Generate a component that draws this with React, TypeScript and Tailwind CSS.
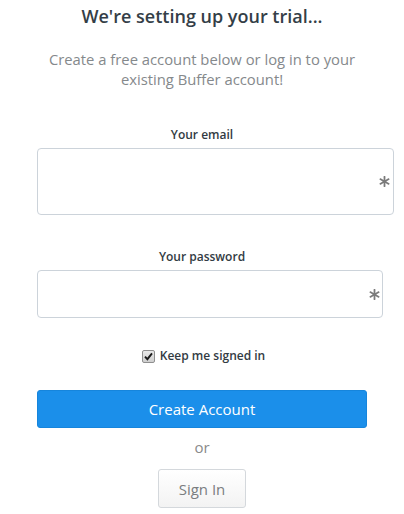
import React from "react";
import { FaAsterisk } from "react-icons/fa";

export default function App() {
  return (
    <div
      className="w-[404px] h-[514px] bg-white flex flex-col overflow-hidden"
      style={{ fontFamily: '"Open Sans", "Liberation Sans", sans-serif' }}
    >
      <h1 className="pt-[4px] text-center text-[18px] leading-[24px] font-semibold text-[#343e47]">
        We're setting up your trial...
      </h1>
      <p className="mt-[21px] text-center text-[14.8px] leading-[20px] text-[#85898c] px-[40px]">
        Create a free account below or log in to your existing Buffer account!
      </p>

      <label className="mt-[37px] text-center text-[12px] leading-[18px] font-semibold text-[#323b43]">
        Your email
      </label>
      <div className="mt-[4px] ml-[37px] w-[357px] h-[67px] border border-[#ccd3da] rounded-[4px] flex items-center justify-end pr-[3px]">
        <FaAsterisk className="text-[#7a7a7a]" size={11} />
      </div>

      <label className="mt-[33px] text-center text-[12px] leading-[18px] font-semibold text-[#323b43]">
        Your password
      </label>
      <div className="mt-[4px] ml-[37px] w-[346px] h-[48px] border border-[#ccd3da] rounded-[4px] flex items-center justify-end pr-[2px]">
        <FaAsterisk className="text-[#7a7a7a]" size={11} />
      </div>

      <div className="mt-[29px] flex items-center justify-center gap-[5px] pl-[3px]">
        <span className="w-[13px] h-[13px] border border-[#8f8f8f] rounded-[2px] bg-gradient-to-b from-[#e8e8e8] to-[#cfcfcf] flex items-center justify-center">
          <svg width="9" height="9" viewBox="0 0 9 9">
            <path d="M1 4.6 L3.4 7.2 L8 1.4" stroke="#1a1a1a" strokeWidth="1.9" fill="none" />
          </svg>
        </span>
        <span className="text-[12px] leading-[18px] font-semibold text-[#323b43]">Keep me signed in</span>
      </div>

      <button className="mt-[25px] ml-[37px] w-[330px] h-[38px] rounded-[3px] bg-[#1b8fea] border border-[#1685dc] text-white text-[15px] leading-[20px]">
        Create Account
      </button>

      <div className="mt-[9px] text-center text-[15px] leading-[20px] text-[#8a8a8a]">or</div>

      <div className="mt-[12px] flex justify-center">
        <button className="w-[88px] h-[39px] rounded-[3px] border border-[#d4d8dc] bg-gradient-to-b from-white to-[#f3f3f3] text-[15px] leading-[20px] text-[#7a7d80]">
          Sign In
        </button>
      </div>
    </div>
  );
}
